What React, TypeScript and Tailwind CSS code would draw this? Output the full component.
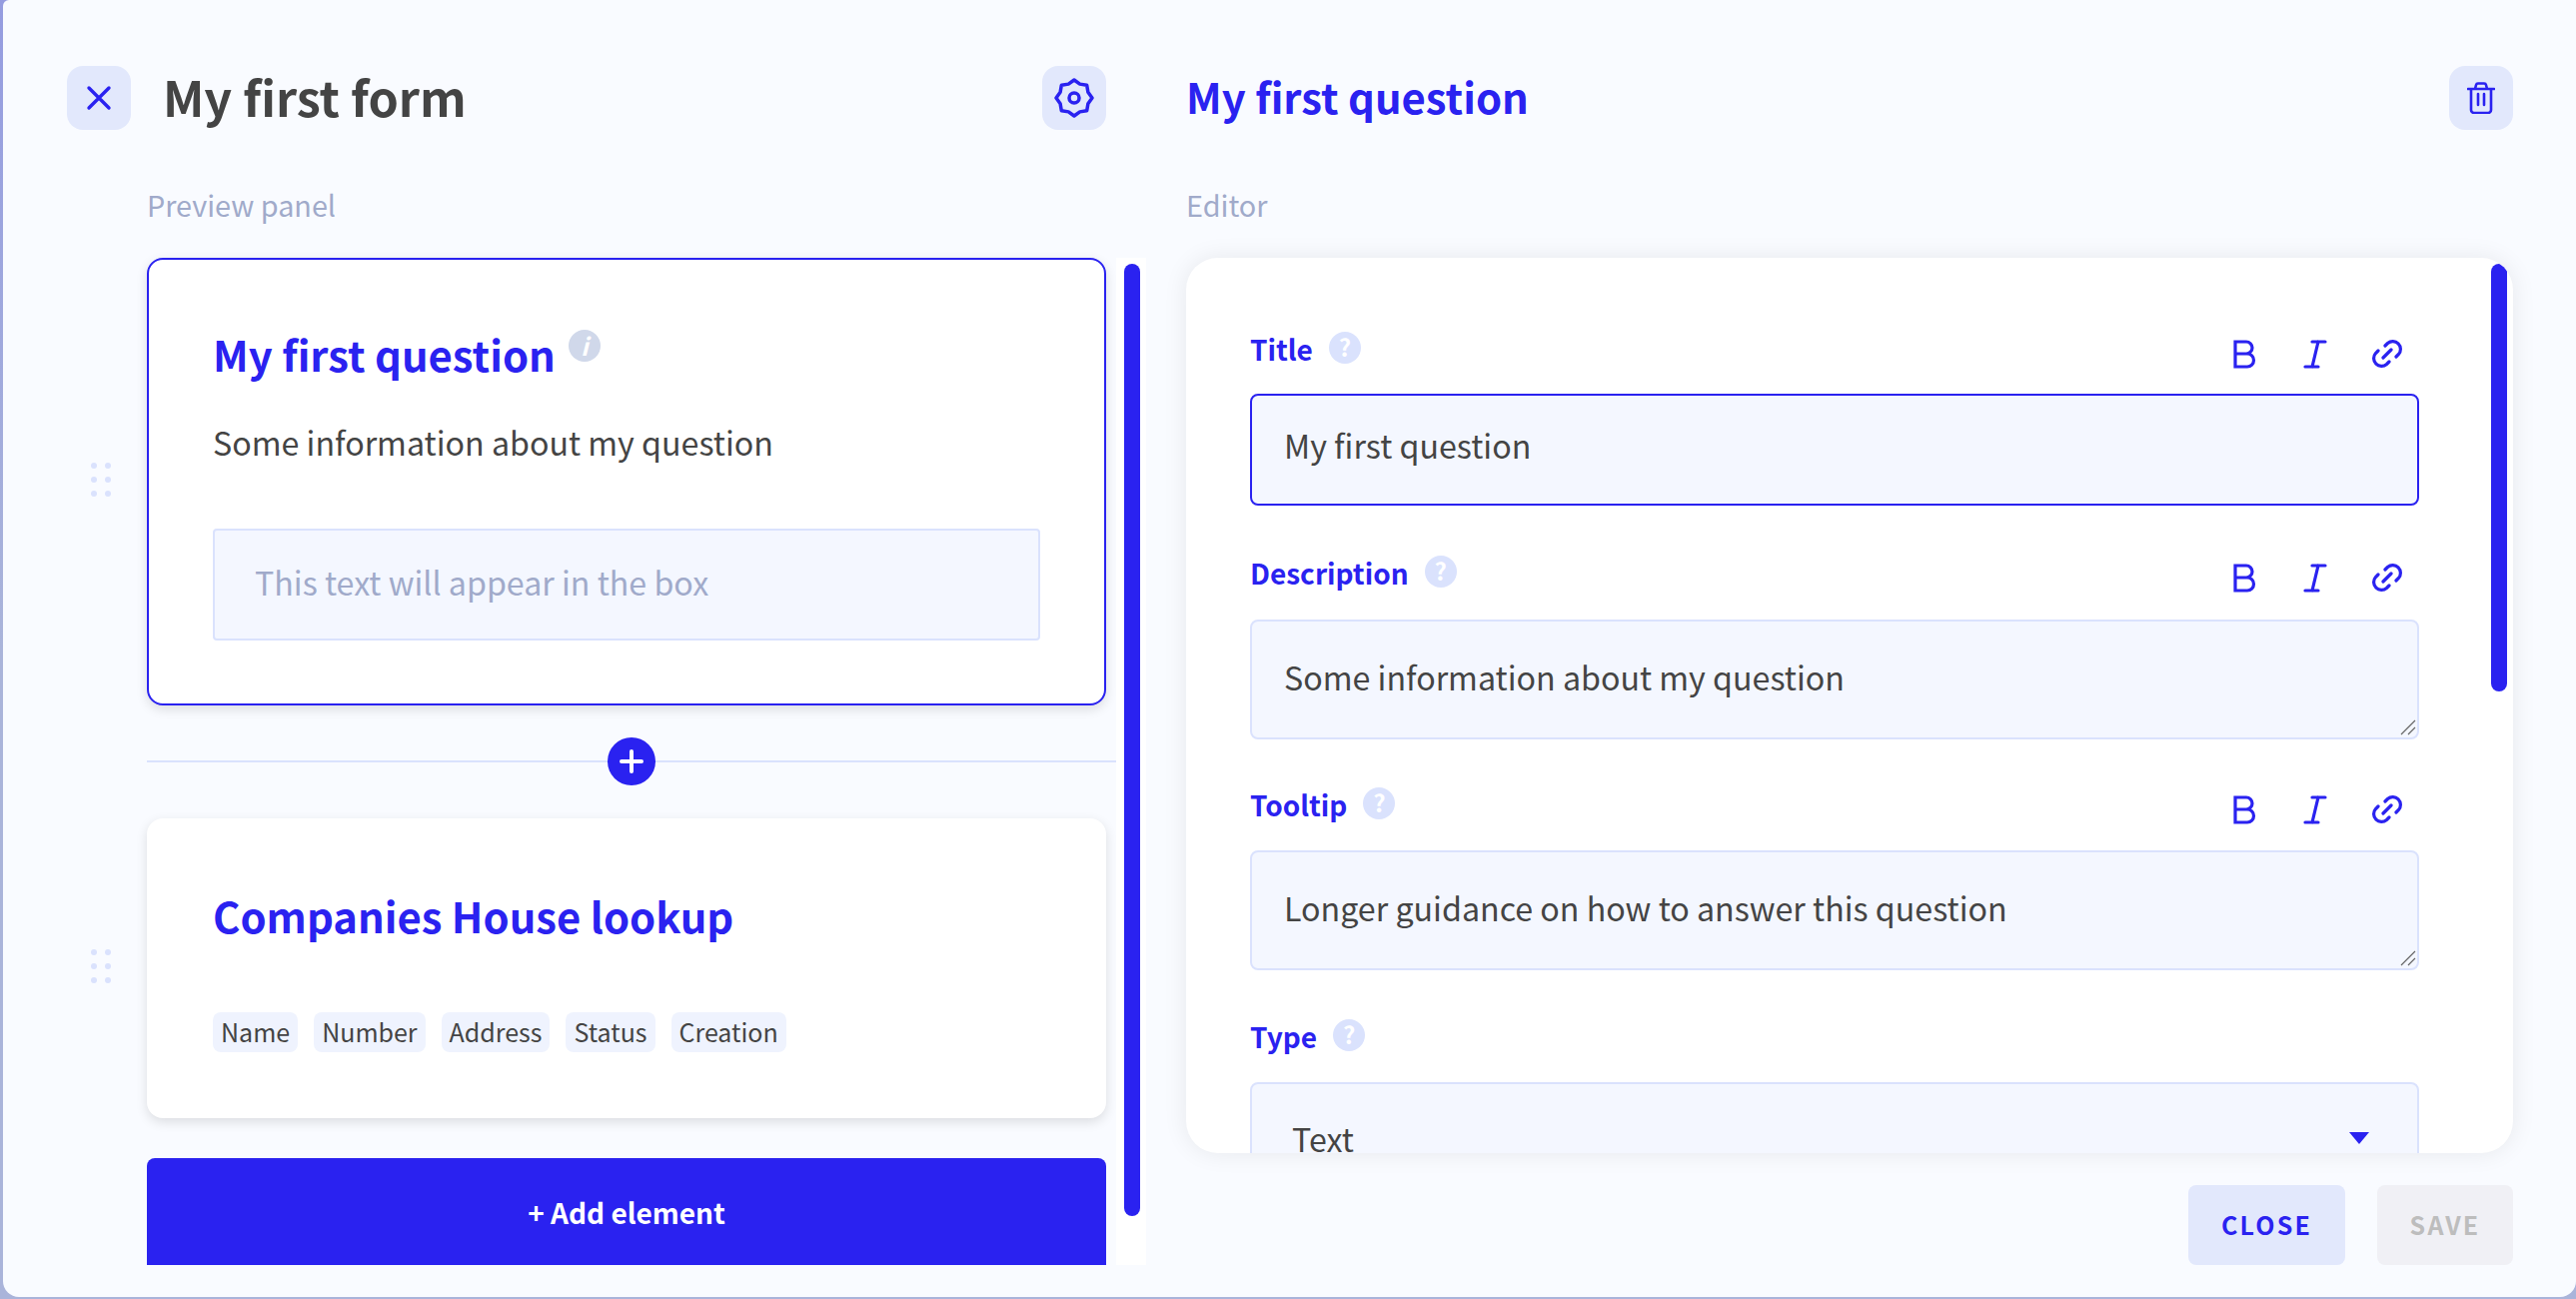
const font = { fontFamily: '"Noto Sans CJK SC", "Noto Sans", sans-serif' }

function HelpDot({ className = '' }: { className?: string }) {
  return (
    <span className={`flex h-8 w-8 shrink-0 items-center justify-center rounded-full bg-[#dae2fd] pb-[3px] text-[24px] leading-none font-bold text-white ${className}`}>
      ?
    </span>
  )
}

function FormatIcons() {
  return (
    <div className="flex items-center text-[#2a22f0]">
      <svg width="24" height="30" viewBox="0 0 24 30" fill="none" stroke="currentColor" strokeWidth="3.2">
        <path d="M3 3h11a6 6 0 0 1 0 12H3zM3 15h12a6.500 6.500 0 0 1 0 13H3z" />
      </svg>
      <svg className="ml-[47px]" width="24" height="30" viewBox="0 0 24 30" fill="none" stroke="currentColor" strokeWidth="3.2" strokeLinecap="round">
        <path d="M9 3h13M2 28h13M15 3 9 28" />
      </svg>
      <svg className="ml-[45px]" width="30" height="30" viewBox="0 0 30 30" fill="none" stroke="currentColor" strokeWidth="3.2" strokeLinecap="round">
        <path d="M13 7l2.500-2.500a7.800 7.800 0 0 1 11 11L24 18M17 23l-2.500 2.500a7.800 7.800 0 0 1-11-11L6 12M11 19l8-8" />
      </svg>
    </div>
  )
}

function FieldLabel({ label }: { label: string }) {
  return (
    <div className="flex h-[38px] items-start justify-between pr-[17px]">
      <div className="flex items-center gap-[16px]">
        <span className="mb-[4px] text-[28px] leading-[34px] font-semibold text-[#2a22f0]">{label}</span>
        <HelpDot className="-mt-[6px]" />
      </div>
      <div className="pt-[7px]">
        <FormatIcons />
      </div>
    </div>
  )
}

function TextBox({ text }: { text: string }) {
  return (
    <div className="relative flex h-[120px] items-center rounded-[8px] border-2 border-[#dae2fd] bg-[#f4f7ff] pb-[6px] pl-[32px] text-[32.200px] text-[#444444]">
      {text}
      <svg className="absolute right-[1px] bottom-[2px]" width="16" height="16" viewBox="0 0 16 16" fill="none" stroke="#666666" strokeWidth="1.2">
        <path d="M15 1 1 15M15 8l-7 7" />
      </svg>
    </div>
  )
}

function DragDots() {
  return (
    <div className="mb-[4px] grid w-[20px] shrink-0 grid-cols-2 gap-x-[8px] gap-y-[8px]">
      {[0, 1, 2, 3, 4, 5].map(i => (
        <span key={i} className="h-[6px] w-[6px] rounded-full bg-[#dae2fd]" />
      ))}
    </div>
  )
}

function Chip({ text }: { text: string }) {
  return (
    <span className="rounded-[8px] bg-[#eff3fe] px-[8px] pb-[1px] text-[25px] leading-[39px] text-[#444444]">
      {text}
    </span>
  )
}

export default function App() {
  return (
    <div className="h-[1300px] w-[2578px] overflow-hidden bg-gradient-to-b from-[#959ce0] via-[#aab4da] to-[#aab4da]" style={font}>
      <div className="ml-[3px] flex h-[1298px] w-[2575px] flex-col rounded-tl-[6px] rounded-b-[16px] bg-[#f9fbff] pr-[63px] pl-[64px]">
        <div className="flex h-[258px] shrink-0">
          <div className="w-[1040px] shrink-0">
            <div className="mt-[66px] flex h-[64px] items-center justify-between">
              <div className="flex items-center gap-[32px]">
                <button className="flex h-16 w-16 items-center justify-center rounded-[16px] bg-[#e2e8fc] text-[#2a22f0]">
                  <svg width="26" height="26" viewBox="0 0 26 26" fill="none" stroke="currentColor" strokeWidth="3.4" strokeLinecap="round"><path d="M3 3l20 20M23 3 3 23" /></svg>
                </button>
                <h1 className="pb-[3px] text-[48.500px] leading-[61px] font-semibold text-[#444444]">My first form</h1>
              </div>
              <button className="flex h-16 w-16 items-center justify-center rounded-[16px] bg-[#e2e8fc] text-[#2a22f0]">
                <svg width="40" height="40" viewBox="0 0 40 40" fill="none" stroke="currentColor" strokeWidth="3.500" strokeLinejoin="round">
                  <path d="M20 2l5.700 4.100 7 1.200 1.200 7L38 20l-4.100 5.700-1.200 7-7 1.200L20 38l-5.700-4.100-7-1.200-1.200-7L2 20l4.100-5.700 1.200-7 7-1.200z" />
                  <circle cx="20" cy="20" r="5" />
                </svg>
              </button>
            </div>
            <p className="mt-[55px] pl-[80px] text-[28.800px] leading-[40px] text-[#a0aaca]">Preview panel</p>
          </div>
          <div className="ml-[80px] flex-1">
            <div className="mt-[66px] flex h-[64px] items-center justify-between">
              <h2 className="pb-[3px] text-[41.800px] leading-[61px] font-semibold text-[#2a22f0]">My first question</h2>
              <button className="flex h-16 w-16 items-center justify-center rounded-[16px] bg-[#e2e8fc] text-[#2a22f0]">
                <svg width="28" height="32" viewBox="0 0 28 32" fill="none" stroke="currentColor" strokeWidth="2.600" strokeLinecap="round">
                  <path d="M1 7h26M8 7l1-4a2 2 0 0 1 2-1.500h6a2 2 0 0 1 2 1.500l1 4M4 7v21a3 3 0 0 0 3 3h14a3 3 0 0 0 3-3V7M11 12v11M17 12v11" />
                </svg>
              </button>
            </div>
            <p className="mt-[55px] text-[28.800px] leading-[40px] text-[#a0aaca]">Editor</p>
          </div>
        </div>

        <div className="flex min-h-0 flex-1">
          <div className="flex h-[1008px] w-[1080px] shrink-0">
            <div className="flex w-[1040px] shrink-0 flex-col">
              <div className="flex items-center">
                <div className="w-[80px] pl-[24px]"><DragDots /></div>
                <div className="h-[448px] w-[960px] rounded-[16px] border-2 border-[#2a22f0] bg-white px-[64px] pt-[62px] shadow-[0_4px_12px_rgba(0,0,0,0.12)]">
                  <div className="flex items-start gap-[13px]">
                    <h3 className="text-[41.800px] leading-[64px] font-semibold text-[#2a22f0]">My first question</h3>
                    <span className="mt-[8px] flex h-8 w-8 items-center justify-center rounded-full bg-[#d0d8ea] text-[24px] leading-none font-bold text-white italic">i</span>
                  </div>
                  <p className="mt-[32px] text-[32.200px] leading-[48px] text-[#444444]">Some information about my question</p>
                  <div className="mt-[63px] flex h-[112px] items-center rounded-[4px] border-2 border-[#dae2fd] bg-[#f4f7ff] pb-[6px] pl-[40px] text-[32.200px] text-[#a0aaca]">
                    This text will appear in the box
                  </div>
                </div>
              </div>
              <div className="relative mt-[55px] ml-[80px] h-[2px] w-[970px] bg-[#dae2fd]">
                <button className="absolute -top-[23px] left-[461px] flex h-12 w-12 items-center justify-center rounded-full bg-[#2a22f0] text-white">
                  <svg width="26" height="26" viewBox="0 0 26 26" stroke="currentColor" strokeWidth="4" strokeLinecap="round"><path d="M13 3v20M3 13h20" /></svg>
                </button>
              </div>
              <div className="mt-[56px] flex items-center">
                <div className="w-[80px] pl-[24px]"><DragDots /></div>
                <div className="h-[300px] w-[960px] rounded-[16px] bg-white px-[66px] pt-[65px] shadow-[0_4px_12px_rgba(0,0,0,0.12)]">
                  <h3 className="text-[41.800px] leading-[64px] font-semibold text-[#2a22f0]">Companies House lookup</h3>
                  <div className="mt-[65px] flex gap-[16px]">
                    {['Name', 'Number', 'Address', 'Status', 'Creation'].map(t => (
                      <Chip key={t} text={t} />
                    ))}
                  </div>
                </div>
              </div>
              <div className="mt-[40px] ml-[80px] flex h-[107px] w-[960px] items-center justify-center rounded-t-[8px] bg-[#2a22f0] text-[28px] font-semibold text-white">
                + Add element
              </div>
            </div>
            <div className="ml-[10px] h-[1008px] w-[30px] bg-white pt-[6px] pl-[8px]">
              <div className="h-[953px] w-4 rounded-full bg-[#2a22f0]" />
            </div>
          </div>
          <div className="ml-[40px] flex-1">
            <div className="relative h-[896px] w-[1328px] overflow-hidden rounded-[32px] bg-white pt-[74px] pr-[94px] pl-[64px] shadow-[0_0_24px_rgba(0,0,0,0.08)]">
              <FieldLabel label="Title" />
              <div className="mt-[24px] flex h-[112px] items-center rounded-[8px] border-2 border-[#2a22f0] bg-[#f4f7ff] pb-[10px] pl-[32px] text-[32.200px] text-[#444444]">
                My first question
              </div>
              <div className="mt-[50px]"><FieldLabel label="Description" /></div>
              <div className="mt-[26px]"><TextBox text="Some information about my question" /></div>
              <div className="mt-[48px]"><FieldLabel label="Tooltip" /></div>
              <div className="mt-[25px]"><TextBox text="Longer guidance on how to answer this question" /></div>
              <div className="mt-[49px] flex h-[38px] items-start gap-[16px]">
                <span className="text-[28px] leading-[34px] font-semibold text-[#2a22f0]">Type</span>
                <HelpDot />
              </div>
              <div className="mt-[25px] flex h-[112px] items-center justify-between rounded-[8px] border-2 border-[#dae2fd] bg-[#f4f7ff] pr-[48px] pl-[40px] text-[32.200px] text-[#444444]">
                Text
                <svg width="20" height="12" viewBox="0 0 20 12" fill="#2a22f0"><path d="M0 0h20L10 12z" /></svg>
              </div>
              <div className="absolute top-[6px] right-[6px] h-[428px] w-4 rounded-full bg-[#2a22f0]" />
            </div>
            <div className="mt-[32px] flex justify-end gap-[32px]">
              <button className="h-[80px] w-[157px] rounded-[8px] bg-[#e2e8fc] text-[25px] font-semibold tracking-[2.200px] text-[#2a22f0]">CLOSE</button>
              <button className="h-[80px] w-[136px] rounded-[8px] bg-[#f0f0f5] text-[25px] font-semibold tracking-[2.200px] text-[#bdbdbd]">SAVE</button>
            </div>
          </div>
        </div>
      </div>
    </div>
  )
}
